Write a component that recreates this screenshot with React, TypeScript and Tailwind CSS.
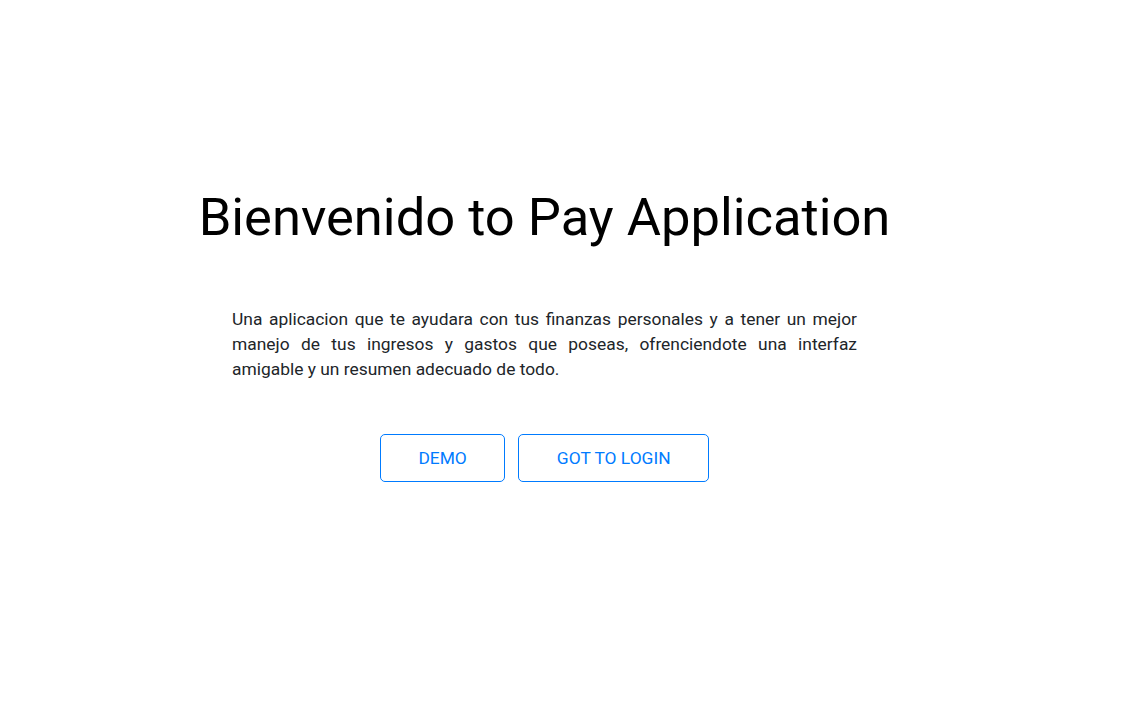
export default function App() {
  return (
    <div className="min-h-screen bg-white font-['Roboto',sans-serif]">
      <div className="w-[1089px] flex flex-col items-center pt-[182px]">
        <h1 className="text-[52.5px] leading-[70px] text-black font-normal">
          Bienvenido to Pay Application
        </h1>
        <p className="mt-[55px] w-[625px] text-[17.4px] leading-[25px] text-[#212529] text-justify">
          Una aplicacion que te ayudara con tus finanzas personales y a tener un mejor manejo de tus ingresos y gastos
          que poseas, ofrenciendote una interfaz amigable y un resumen adecuado de todo.
        </p>
        <div className="mt-[52px] flex gap-[13px]">
          <button className="h-[48px] px-[37.5px] border border-[#007bff] rounded-[5px] text-[#007bff] text-[17.4px]">
            DEMO
          </button>
          <button className="h-[48px] px-[37.5px] border border-[#007bff] rounded-[5px] text-[#007bff] text-[17.4px]">
            GOT TO LOGIN
          </button>
        </div>
      </div>
    </div>
  );
}
